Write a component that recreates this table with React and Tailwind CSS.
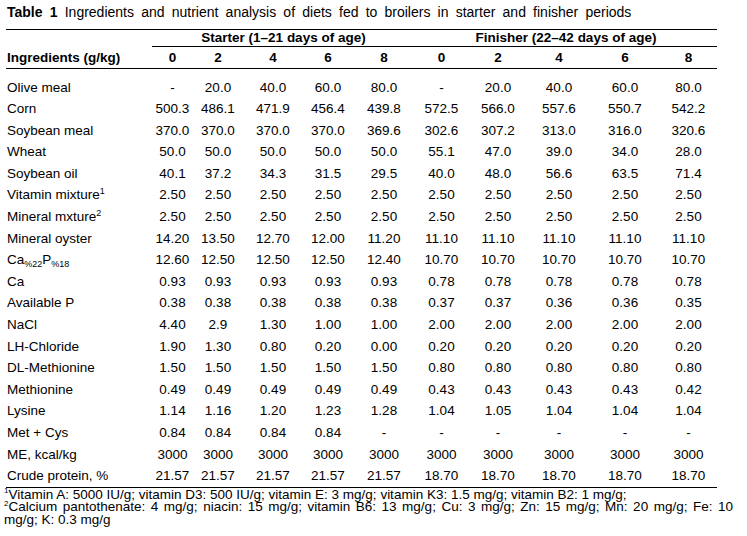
import React from "react";

const COLS =
  "grid grid-cols-[146px_41px_50px_60px_50px_62px_53px_60px_62px_70px_57px]";

const r = (v, n) => Array(n).fill(v);

const rows = [
  [<>Olive meal</>, "-", "20.0", "40.0", "60.0", "80.0", "-", "20.0", "40.0", "60.0", "80.0"],
  [<>Corn</>, "500.3", "486.1", "471.9", "456.4", "439.8", "572.5", "566.0", "557.6", "550.7", "542.2"],
  [<>Soybean meal</>, "370.0", "370.0", "370.0", "370.0", "369.6", "302.6", "307.2", "313.0", "316.0", "320.6"],
  [<>Wheat</>, "50.0", "50.0", "50.0", "50.0", "50.0", "55.1", "47.0", "39.0", "34.0", "28.0"],
  [<>Soybean oil</>, "40.1", "37.2", "34.3", "31.5", "29.5", "40.0", "48.0", "56.6", "63.5", "71.4"],
  [
    <>
      Vitamin mixture<sup className="text-[9px] top-[-0.6em]">1</sup>
    </>,
    ...r("2.50", 10),
  ],
  [
    <>
      Mineral mxture<sup className="text-[9px] top-[-0.6em]">2</sup>
    </>,
    ...r("2.50", 10),
  ],
  [<>Mineral oyster</>, "14.20", "13.50", "12.70", "12.00", "11.20", ...r("11.10", 5)],
  [
    <>
      Ca<sub className="text-[9px] top-[0.25em]">%22</sub>P
      <sub className="text-[9px] top-[0.25em]">%18</sub>
    </>,
    "12.60", "12.50", "12.50", "12.50", "12.40", ...r("10.70", 5),
  ],
  [<>Ca</>, ...r("0.93", 5), ...r("0.78", 5)],
  [<>Available P</>, ...r("0.38", 5), "0.37", "0.37", "0.36", "0.36", "0.35"],
  [<>NaCl</>, "4.40", "2.9", "1.30", "1.00", "1.00", ...r("2.00", 5)],
  [<>LH-Chloride</>, "1.90", "1.30", "0.80", "0.20", "0.00", ...r("0.20", 5)],
  [<>DL-Methionine</>, ...r("1.50", 5), ...r("0.80", 5)],
  [<>Methionine</>, ...r("0.49", 5), "0.43", "0.43", "0.43", "0.43", "0.42"],
  [<>Lysine</>, "1.14", "1.16", "1.20", "1.23", "1.28", "1.04", "1.05", "1.04", "1.04", "1.04"],
  [<>Met + Cys</>, ...r("0.84", 4), ...r("-", 6)],
  [<>ME, kcal/kg</>, ...r("3000", 10)],
  [<>Crude protein, %</>, ...r("21.57", 5), ...r("18.70", 5)],
];

const heads = ["0", "2", "4", "6", "8", "0", "2", "4", "6", "8"];

export default function App() {
  return (
    <div
      className="w-[747px] h-[536px] bg-white text-black overflow-hidden"
      style={{ fontFamily: '"Liberation Sans", Arial, sans-serif' }}
    >
      <div className="pt-[4px] pl-[7px] text-[14px] leading-[16px] whitespace-nowrap [word-spacing:3.3px]">
        <span className="font-bold">Table 1</span> Ingredients and nutrient
        analysis of diets fed to broilers in starter and finisher periods
      </div>

      <div className="ml-[6px] w-[711px] mt-[9px] border-t border-black text-[13.5px]">
        <div className={`${COLS} h-[17px]`}>
          <div />
          <div className="col-span-5 border-b border-black font-bold text-center leading-[16px]">
            Starter (1–21 days of age)
          </div>
          <div className="col-span-5 border-b border-black font-bold text-center leading-[16px]">
            Finisher (22–42 days of age)
          </div>
        </div>
        <div className={`${COLS} h-[22px] border-b border-black items-center font-bold`}>
          <div className="pl-[1px] leading-[21px]">Ingredients (g/kg)</div>
          {heads.map((h, i) => (
            <div key={i} className="text-center leading-[21px]">
              {h}
            </div>
          ))}
        </div>
        <div className="pt-[7.5px] border-b border-black">
          {rows.map((row, i) => (
            <div key={i} className={`${COLS} h-[21.6px] leading-[21.6px]`}>
              <div className="pl-[1px] whitespace-nowrap">{row[0]}</div>
              {row.slice(1).map((v, j) => (
                <div key={j} className="text-center">
                  {v}
                </div>
              ))}
            </div>
          ))}
        </div>
      </div>

      <div className="pl-[4px] pt-[1px] text-[13.5px] leading-[12.6px] w-[733px]">
        <div className="whitespace-nowrap">
          <sup className="text-[8px] top-[-0.7em]">1</sup>Vitamin A: 5000 IU/g;
          vitamin D3: 500 IU/g; vitamin E: 3 mg/g; vitamin K3: 1.5 mg/g; vitamin
          B2: 1 mg/g;
        </div>
        <div className="text-justify [text-align-last:justify]">
          <sup className="text-[8px] top-[-0.7em]">2</sup>Calcium pantothenate: 4
          mg/g; niacin: 15 mg/g; vitamin B6: 13 mg/g; Cu: 3 mg/g; Zn: 15 mg/g;
          Mn: 20 mg/g; Fe: 10
        </div>
        <div className="whitespace-nowrap">mg/g; K: 0.3 mg/g</div>
      </div>
    </div>
  );
}
